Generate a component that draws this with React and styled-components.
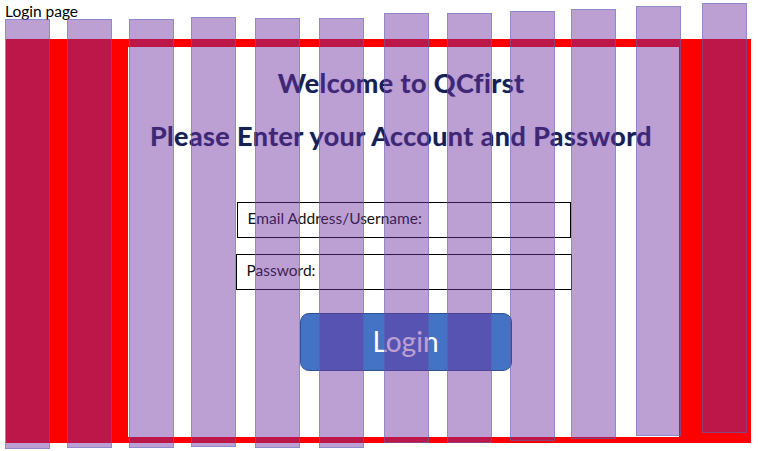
import React from "react";
import styled, { createGlobalStyle } from "styled-components";

const GlobalStyle = createGlobalStyle`
  html, body { margin: 0; padding: 0; background: #ffffff; }
  body { font-family: Lato, "Open Sans", sans-serif; }
`;

const Page = styled.div`
  position: relative;
  width: 758px;
  height: 451px;
  overflow: hidden;
  background: #ffffff;
`;

const Caption = styled.div`
  padding: 2px 0 0 5px;
  height: 20px;
  font-size: 15.5px;
  line-height: 18px;
  color: #000000;
`;

const Frame = styled.div`
  box-sizing: border-box;
  margin: 17px 0 0 6px;
  width: 745px;
  height: 404px;
  border-style: solid;
  border-color: #ff0000;
  border-width: 8px 72px 6px 122px;
  background: #ffffff;
  display: flex;
  flex-direction: column;
  align-items: center;
`;

const Title = styled.h1`
  margin: ${(p) => p.$top}px 0 0 ${(p) => p.$shift || 0}px;
  font-size: 27px;
  letter-spacing: 0.4px;
  line-height: 30px;
  font-weight: 700;
  color: #18204f;
  text-shadow: 0 0 1px rgba(70, 110, 220, 0.7);
  white-space: nowrap;
`;

const Field = styled.div`
  box-sizing: border-box;
  margin: ${(p) => p.$top}px 0 0 0;
  width: ${(p) => p.$width}px;
  height: 36px;
  border: 1px solid #000000;
  padding: 6px 0 0 ${(p) => p.$pad}px;
  font-size: 15.5px;
  line-height: 18px;
  color: #111111;
  background: #ffffff;
`;

const LoginButton = styled.button`
  box-sizing: border-box;
  margin: 23px 0 0 4px;
  width: 212px;
  height: 58px;
  border: 1px solid #2f528f;
  border-radius: 9px;
  background: #4472c4;
  color: #ffffff;
  font-family: Lato, "Open Sans", sans-serif;
  font-size: 28px;
  line-height: 1;
  padding: 0 0 2px 0;
  cursor: pointer;
`;

const Overlay = styled.div`
  position: absolute;
  inset: 0;
  pointer-events: none;
`;

const Bar = styled.div`
  position: absolute;
  box-sizing: border-box;
  left: ${(p) => p.$x}px;
  top: ${(p) => p.$top}px;
  width: 45px;
  height: ${(p) => p.$bottom - p.$top}px;
  background: rgba(112, 48, 160, 0.46);
  border: 1.5px solid rgba(90, 110, 190, 0.45);
`;

const bars = [
  [5, 19, 449],
  [67, 19, 448],
  [129, 19, 448],
  [191, 17, 447],
  [255, 18, 448],
  [319, 18, 448],
  [384, 13, 443],
  [447, 13, 443],
  [510, 11, 441],
  [571, 9, 439],
  [636, 6, 436],
  [702, 3, 433],
];

export default function App() {
  return (
    <>
      <GlobalStyle />
      <Page>
        <Caption>Login page</Caption>
        <Frame>
          <Title $top={21} $shift={-5}>Welcome to QCfirst</Title>
          <Title $top={23} $shift={-5}>Please Enter your Account and Password</Title>
          <Field $top={51} $width={334} $pad={10}>Email Address/Username:</Field>
          <Field $top={16} $width={336} $pad={10}>Password:</Field>
          <LoginButton>Login</LoginButton>
        </Frame>
        <Overlay>
          {bars.map(([x, t, b]) => (
            <Bar key={x} $x={x} $top={t} $bottom={b} />
          ))}
        </Overlay>
      </Page>
    </>
  );
}
